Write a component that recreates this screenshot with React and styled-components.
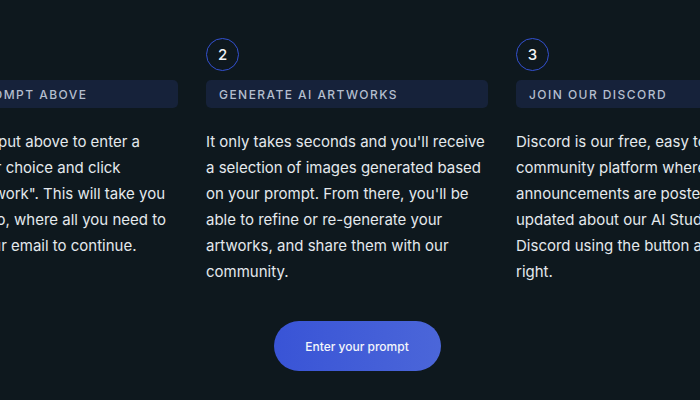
import React from 'react'
import styled, { createGlobalStyle } from 'styled-components'

const steps = [
  {
    num: 1,
    title: 'Enter a prompt above',
    text: 'Use the text input above to enter a prompt of your choice and click "Generate Artwork". This will take you to our AI Studio, where all you need to do is enter your email to continue.',
  },
  {
    num: 2,
    title: 'Generate AI artworks',
    text: "It only takes seconds and you'll receive a selection of images generated based on your prompt. From there, you'll be able to refine or re-generate your artworks, and share them with our community.",
  },
  {
    num: 3,
    title: 'Join our Discord',
    text: 'Discord is our free, easy to use community platform where all announcements are posted. Stay updated about our AI Studio in our Discord using the button at the top right.',
  },
]

const App = () => {
  return (
    <>
      <GlobalStyle />
      <Page>
        <Steps>
          {steps.map((step) => (
            <Step key={step.num}>
              <Num>{step.num}</Num>
              <StepTitle>{step.title}</StepTitle>
              <StepText>{step.text}</StepText>
            </Step>
          ))}
        </Steps>
        <ButtonRow>
          <PromptButton type="button">Enter your prompt</PromptButton>
        </ButtonRow>
      </Page>
    </>
  )
}

export default App

const GlobalStyle = createGlobalStyle`
  body {
    margin: 0;
    background: #0e181e;
    font-family: Inter, "Noto Sans", sans-serif;
    overflow: hidden;
  }
`;

const Page = styled.div`
  width: 700px;
  height: 400px;
  overflow: hidden;
  padding-top: 38px;
  box-sizing: border-box;
`;

const Steps = styled.div`
  display: flex;
  justify-content: center;
  gap: 28px;
  padding-right: 6px;
`;

const Step = styled.div`
  width: 282px;
  flex-shrink: 0;
  display: flex;
  flex-direction: column;
  align-items: flex-start;
`;

const Num = styled.div`
  width: 33px;
  height: 33px;
  box-sizing: border-box;
  border: 1.5px solid #3350d0;
  border-radius: 50%;
  display: flex;
  align-items: center;
  justify-content: center;
  color: #f2f4f7;
  font-size: 15px;
  font-weight: 500;
`;

const StepTitle = styled.div`
  margin-top: 9px;
  width: 100%;
  height: 28px;
  box-sizing: border-box;
  padding-left: 13px;
  display: flex;
  align-items: center;
  background: #16223a;
  border-radius: 5px;
  color: #b4bece;
  font-size: 12px;
  font-weight: 500;
  letter-spacing: 1.45px;
  text-transform: uppercase;
`;

const StepText = styled.p`
  margin: 21px 0 0;
  color: #e4e9ed;
  font-size: 15px;
  line-height: 26px;
`;

const ButtonRow = styled.div`
  display: flex;
  justify-content: center;
  padding-left: 14px;
  margin-top: 36px;
`;

const PromptButton = styled.button`
  width: 167px;
  height: 50px;
  border: none;
  border-radius: 25px;
  background: linear-gradient(90deg, #3954d6, #4b66d9);
  color: #f4f6fb;
  font-family: Inter, sans-serif;
  font-size: 12px;
  font-weight: 500;
  cursor: pointer;
`;
